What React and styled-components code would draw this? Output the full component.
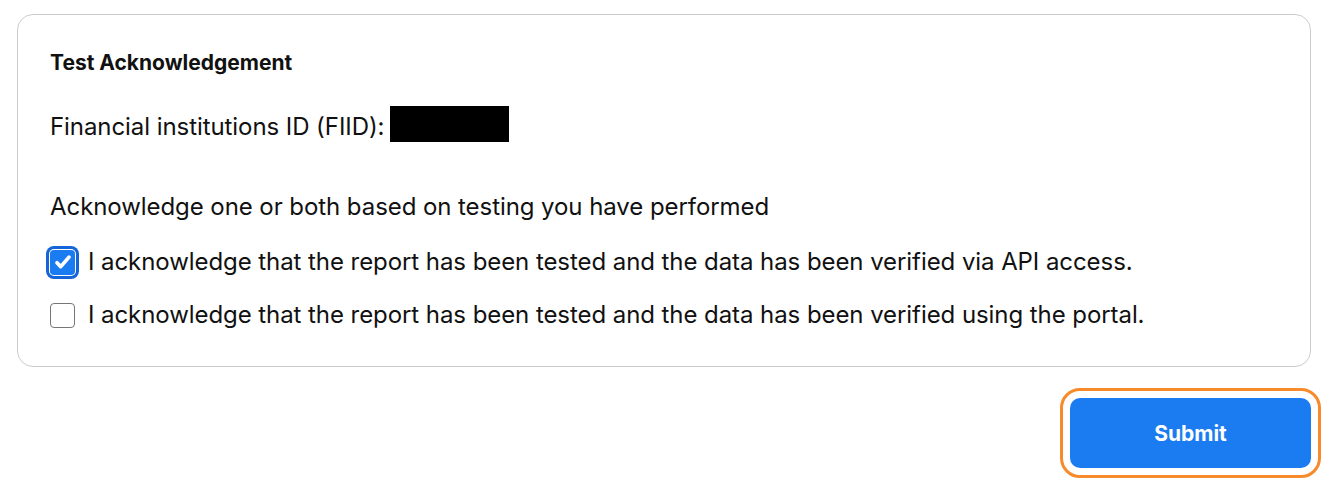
import React, { useState } from 'react'
import styled, { createGlobalStyle } from 'styled-components'

const GlobalStyle = createGlobalStyle`
  body {
    margin: 0;
    background: #ffffff;
    font-family: Inter, "Liberation Sans", sans-serif;
    color: #111111;
  }
`

const Page = styled.div`
  padding: 14px 21px 14px 17px;
  display: flex;
  flex-direction: column;
`

const Card = styled.section`
  border: 1px solid #cccccc;
  border-radius: 16px;
  padding: 35px 32px 36px;
  display: flex;
  flex-direction: column;
`

const Title = styled.h2`
  margin: 0;
  font-size: 21px;
  font-weight: 700;
  line-height: 26px;
`

const IdRow = styled.div`
  display: flex;
  align-items: flex-end;
  gap: 6px;
  margin-top: 30px;
  font-size: 24px;
  line-height: 30px;
  letter-spacing: -0.07px;
`

const Redacted = styled.span`
  display: inline-block;
  width: 119px;
  height: 36px;
  background: #000000;
`

const Prompt = styled.p`
  margin: 50px 0 0;
  font-size: 24px;
  line-height: 30px;
  letter-spacing: -0.07px;
`

const Options = styled.div`
  display: flex;
  flex-direction: column;
  gap: 23px;
  margin-top: 25px;
`

const OptionRow = styled.label`
  display: flex;
  align-items: center;
  gap: 13px;
  font-size: 24px;
  line-height: 30px;
  letter-spacing: -0.07px;
  cursor: pointer;
`

const Box = styled.span`
  flex: none;
  width: 25px;
  height: 25px;
  box-sizing: border-box;
  border-radius: 4px;
  display: flex;
  align-items: center;
  justify-content: center;
  border: ${(p) => (p.$checked ? 'none' : '1.5px solid #767676')};
  background: ${(p) => (p.$checked ? '#1a7cf0' : '#ffffff')};
  box-shadow: ${(p) => (p.$checked ? '0 0 0 1px #ffffff, 0 0 0 4px #1565d8' : 'none')};
`

const Actions = styled.div`
  display: flex;
  justify-content: flex-end;
  margin-top: 31px;
`

const SubmitButton = styled.button`
  width: 241px;
  height: 70px;
  border: none;
  border-radius: 10px;
  background: #1a7cf0;
  color: #ffffff;
  font-family: Inter, "Liberation Sans", sans-serif;
  font-size: 21px;
  font-weight: 700;
  outline: 3px solid #f78a2a;
  outline-offset: 7px;
  cursor: pointer;
`

const Check = () => (
  <svg width="20" height="20" viewBox="0 0 16 16" fill="none">
    <path d="M3.2 8.6l3 3.1L12.8 4.1" stroke="#ffffff" strokeWidth="3" strokeLinecap="round" strokeLinejoin="round" />
  </svg>
)

const options = [
  'I acknowledge that the report has been tested and the data has been verified via API access.',
  'I acknowledge that the report has been tested and the data has been verified using the portal.',
]

export default function App() {
  const [checked, setChecked] = useState([true, false])
  const toggle = (i) => setChecked((c) => c.map((v, j) => (j === i ? !v : v)))

  return (
    <Page>
      <GlobalStyle />
      <Card>
        <Title>Test Acknowledgement</Title>
        <IdRow>
          Financial institutions ID (FIID):
          <Redacted />
        </IdRow>
        <Prompt>Acknowledge one or both based on testing you have performed</Prompt>
        <Options>
          {options.map((text, i) => (
            <OptionRow key={i} onClick={() => toggle(i)}>
              <Box $checked={checked[i]}>{checked[i] && <Check />}</Box>
              {text}
            </OptionRow>
          ))}
        </Options>
      </Card>
      <Actions>
        <SubmitButton>Submit</SubmitButton>
      </Actions>
    </Page>
  )
}
